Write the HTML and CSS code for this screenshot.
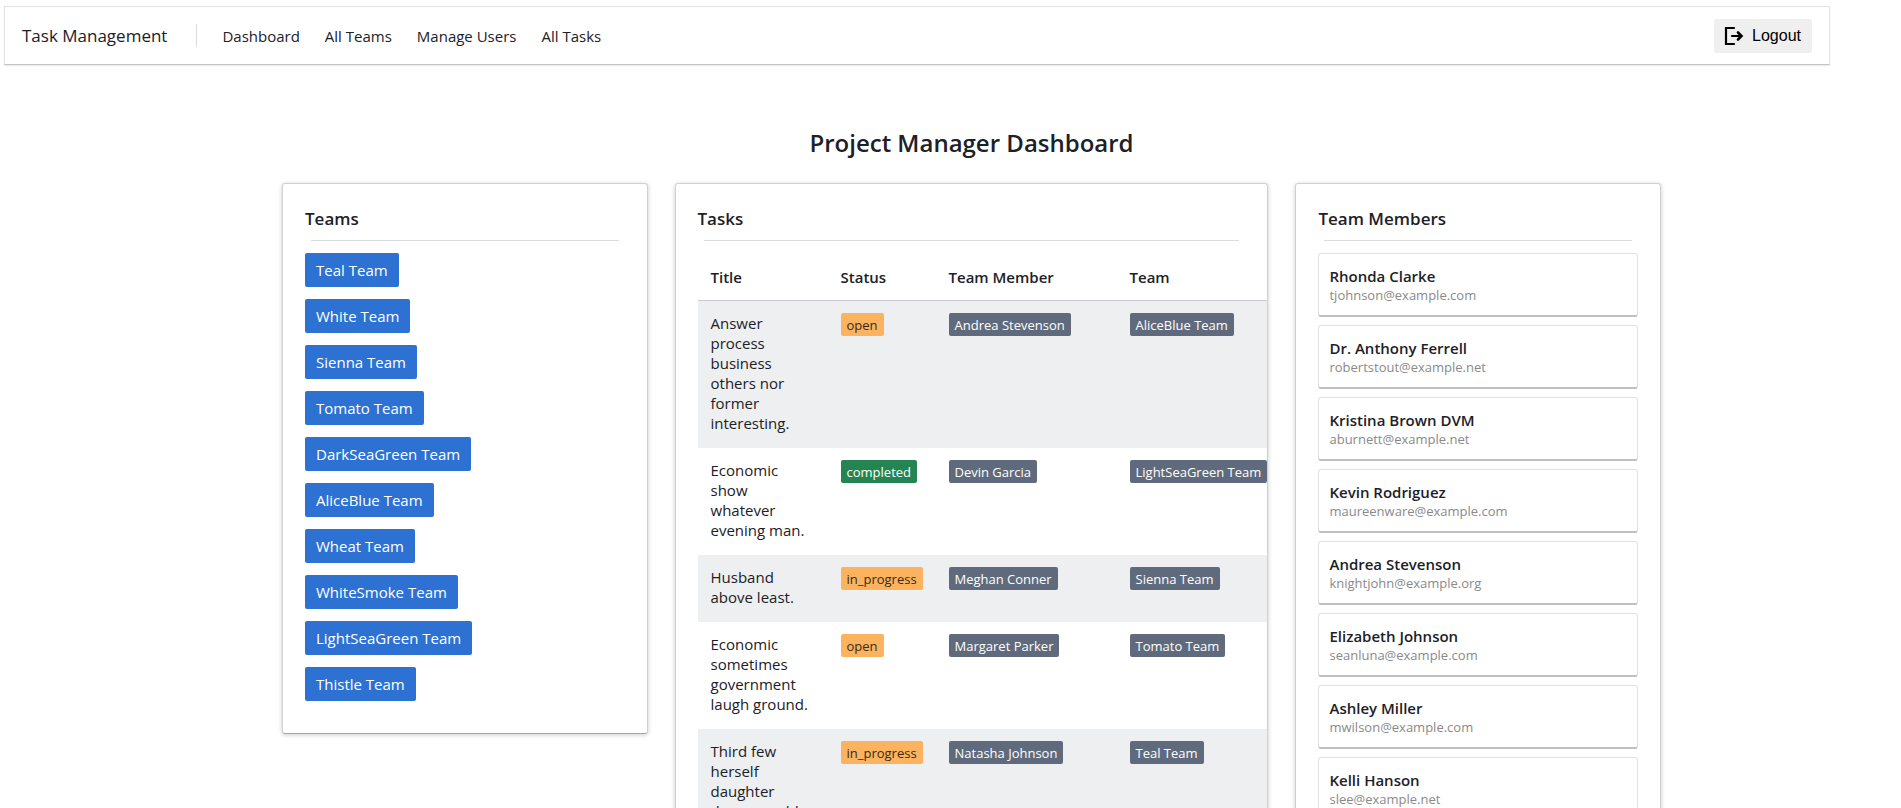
FILE: index.html
```html
<!DOCTYPE html>
<html lang="en">
<head>
<meta charset="utf-8">
<title>Project Manager Dashboard</title>
<link rel="stylesheet" href="styles.css">
</head>
<body>
<header class="navbar">
  <span class="brand">Task Management</span>
  <nav class="nav-links">
    <a href="#">Dashboard</a>
    <a href="#">All Teams</a>
    <a href="#">Manage Users</a>
    <a href="#">All Tasks</a>
  </nav>
  <button class="logout" type="button">
    <svg class="logout-icon" viewBox="0 0 20 20" aria-hidden="true"><path d="M10 2H2v16h8" fill="none" stroke="currentColor" stroke-width="2.200" stroke-linecap="round"/><path d="M8 10h9" fill="none" stroke="currentColor" stroke-width="2.200" stroke-linecap="round"/><path d="M14 6.500l3.500 3.500l-3.500 3.500" fill="none" stroke="currentColor" stroke-width="2.600" stroke-linecap="round"/></svg>
    Logout
  </button>
</header>
<main class="page">
  <h1 class="page-title">Project Manager Dashboard</h1>
  <div class="columns">
    <section class="card">
      <h2 class="card-title">Teams</h2>
      <hr class="rule">
      <div class="team-list">
        <button class="team" type="button">Teal Team</button>
        <button class="team" type="button">White Team</button>
        <button class="team" type="button">Sienna Team</button>
        <button class="team" type="button">Tomato Team</button>
        <button class="team" type="button">DarkSeaGreen Team</button>
        <button class="team" type="button">AliceBlue Team</button>
        <button class="team" type="button">Wheat Team</button>
        <button class="team" type="button">WhiteSmoke Team</button>
        <button class="team" type="button">LightSeaGreen Team</button>
        <button class="team" type="button">Thistle Team</button>
      </div>
    </section>
    <section class="card card-tasks">
      <h2 class="card-title">Tasks</h2>
      <hr class="rule">
      <table class="tasks">
        <colgroup><col class="col-title"><col class="col-status"><col class="col-member"><col class="col-team"></colgroup>
        <thead><tr><th>Title</th><th>Status</th><th>Team Member</th><th>Team</th></tr></thead>
        <tbody>
          <tr><td>Answer process business others nor former interesting.</td><td><span class="badge warn">open</span></td><td><span class="badge">Andrea Stevenson</span></td><td><span class="badge">AliceBlue Team</span></td></tr>
          <tr><td>Economic show whatever evening man.</td><td><span class="badge done">completed</span></td><td><span class="badge">Devin Garcia</span></td><td><span class="badge">LightSeaGreen Team</span></td></tr>
          <tr><td>Husband above least.</td><td><span class="badge warn">in_progress</span></td><td><span class="badge">Meghan Conner</span></td><td><span class="badge">Sienna Team</span></td></tr>
          <tr><td>Economic sometimes government laugh ground.</td><td><span class="badge warn">open</span></td><td><span class="badge">Margaret Parker</span></td><td><span class="badge">Tomato Team</span></td></tr>
          <tr><td>Third few herself daughter dream could.</td><td><span class="badge warn">in_progress</span></td><td><span class="badge">Natasha Johnson</span></td><td><span class="badge">Teal Team</span></td></tr>
        </tbody>
      </table>
    </section>
    <section class="card">
      <h2 class="card-title">Team Members</h2>
      <hr class="rule">
      <ul class="members">
        <li class="member"><strong>Rhonda Clarke</strong><span>tjohnson@example.com</span></li>
        <li class="member"><strong>Dr. Anthony Ferrell</strong><span>robertstout@example.net</span></li>
        <li class="member"><strong>Kristina Brown DVM</strong><span>aburnett@example.net</span></li>
        <li class="member"><strong>Kevin Rodriguez</strong><span>maureenware@example.com</span></li>
        <li class="member"><strong>Andrea Stevenson</strong><span>knightjohn@example.org</span></li>
        <li class="member"><strong>Elizabeth Johnson</strong><span>seanluna@example.com</span></li>
        <li class="member"><strong>Ashley Miller</strong><span>mwilson@example.com</span></li>
        <li class="member"><strong>Kelli Hanson</strong><span>slee@example.net</span></li>
      </ul>
    </section>
  </div>
</main>
</body>
</html>
```
FILE: styles.css
```css
* { box-sizing: border-box; }
body {
  margin: 0;
  background: #fff;
  color: #1c2127;
  font: 15px/20px "Segoe UI", "Open Sans", sans-serif;
}
.navbar {
  display: flex;
  align-items: center;
  height: 59px;
  margin: 6px 71px 0 4px;
  padding: 0 17px;
  border: 1px solid #e2e2e2;
  border-bottom-color: #c4c4c4;
  box-shadow: 0 1px 1px rgba(0, 0, 0, .08);
}
.brand {
  padding-right: 29px;
  font-size: 17px;
}
.nav-links {
  display: flex;
  align-items: center;
  gap: 25px;
  height: 23px;
  padding-left: 25px;
  border-left: 1px solid #dcdcdc;
}
.nav-links a { color: inherit; text-decoration: none; }
.logout {
  display: flex;
  align-items: center;
  gap: 8px;
  height: 34px;
  margin-left: auto;
  padding: 0 11px 0 10px;
  border: 0;
  border-radius: 2px;
  background: #efefef;
  color: #000;
  font: 16px "Liberation Sans", Arial, sans-serif;
}
.logout-icon { width: 20px; height: 20px; }
.page { padding: 62px 240px 32px 282px; }
.page-title {
  margin: 0 0 24px;
  font-size: 24px;
  line-height: 32px;
  font-weight: 600;
  text-align: center;
}
.columns {
  display: grid;
  grid-template-columns: 8fr 13fr 8fr;
  gap: 27px;
  align-items: start;
}
.card {
  min-width: 0;
  padding: 23px 22px 32px;
  border: 1px solid #d0d0d0;
  border-bottom-color: #a4a6a8;
  border-radius: 3px;
  box-shadow: 0 1px 4px rgba(17, 20, 24, .22);
}
.card-tasks { overflow: hidden; }
.card-title {
  margin: 0;
  font-size: 17px;
  line-height: 24px;
  font-weight: 600;
}
.rule {
  height: 1px;
  margin: 9px 6px 12px;
  border: 0;
  background: #dadbdc;
}
.team-list {
  display: flex;
  flex-direction: column;
  align-items: flex-start;
  gap: 12px;
}
.team {
  height: 34px;
  padding: 0 11px;
  border: 0;
  border-radius: 2px;
  background: #2d72d2;
  color: #fff;
  font: inherit;
}
.tasks {
  width: 598px;
  table-layout: fixed;
  border-collapse: collapse;
}
.col-title { width: 130px; }
.col-status { width: 108px; }
.col-member { width: 181px; }
.tasks th {
  padding: 14px 13px 13px;
  border-bottom: 1px solid #c9cbd0;
  font-weight: 600;
  text-align: left;
}
.tasks td {
  padding: 12px 13px 15px;
  vertical-align: top;
}
.tasks tbody tr:nth-child(odd) { background: #edeff0; }
.badge {
  display: inline-block;
  padding: 2px 6px 1px;
  border-radius: 2px;
  background: #5f6b7c;
  color: #fff;
  font-size: 13px;
  white-space: nowrap;
}
.warn { background: #fbb360; color: #392a14; }
.done { background: #238551; color: #fff; }
.members {
  display: grid;
  gap: 8px;
  margin: 0;
  padding: 0;
  list-style: none;
}
.member {
  height: 64px;
  padding: 12px 10px;
  border: 1px solid #e2e2e2;
  border-bottom: 2px solid #c0c0c0;
  border-radius: 3px;
}
.member strong, .member span { display: block; }
.member strong { font-weight: 600; line-height: 20px; }
.member span { color: #8a8a8a; font-size: 13px; line-height: 18px; }
```
